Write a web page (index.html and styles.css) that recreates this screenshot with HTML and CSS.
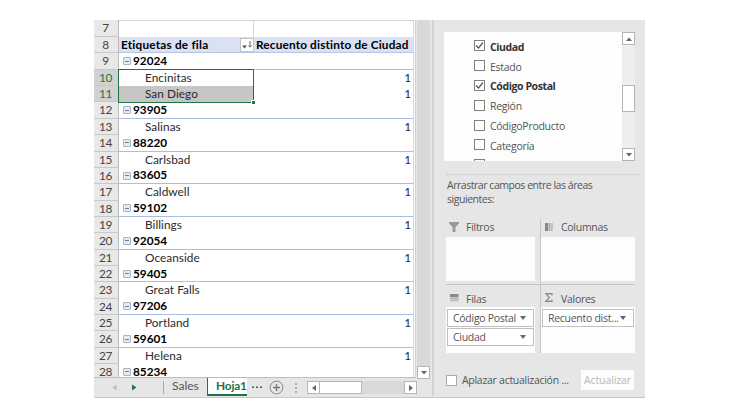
FILE: index.html
```
<!DOCTYPE html>
<html lang="es">
<head>
<meta charset="utf-8">
<title>Tabla dinámica</title>
<link rel="stylesheet" href="styles.css">
</head>
<body>
<main class="window">
  <section class="workbook">
    <div class="view">
      <div class="sheet">
        <div class="row blank"><span class="num">7</span><span class="a"></span><span class="b"></span></div>
        <div class="row head"><span class="num">8</span><span class="a"><span class="h1">Etiquetas de fila</span><span class="sort"><svg width="11" height="10" viewBox="0 0 11 10"><path d="M0 5.500h5l-2.500 3z" fill="#555"/><path d="M8 1v6M6.500 5.500l1.500 1.700 1.500-1.700" fill="none" stroke="#666"/></svg></span></span><span class="b"><span class="h2">Recuento distinto de Ciudad</span></span></div>
        <div class="row group"><span class="num">9</span><span class="a"><i class="fold"></i>92024</span><span class="b"></span></div>
        <div class="row item sel"><span class="num">10</span><span class="a">Encinitas</span><span class="b">1</span></div>
        <div class="row item sel gray"><span class="num">11</span><span class="a">San Diego</span><span class="b">1</span></div>
        <div class="row group"><span class="num">12</span><span class="a"><i class="fold"></i>93905</span><span class="b"></span></div>
        <div class="row item"><span class="num">13</span><span class="a">Salinas</span><span class="b">1</span></div>
        <div class="row group"><span class="num">14</span><span class="a"><i class="fold"></i>88220</span><span class="b"></span></div>
        <div class="row item"><span class="num">15</span><span class="a">Carlsbad</span><span class="b">1</span></div>
        <div class="row group"><span class="num">16</span><span class="a"><i class="fold"></i>83605</span><span class="b"></span></div>
        <div class="row item"><span class="num">17</span><span class="a">Caldwell</span><span class="b">1</span></div>
        <div class="row group"><span class="num">18</span><span class="a"><i class="fold"></i>59102</span><span class="b"></span></div>
        <div class="row item"><span class="num">19</span><span class="a">Billings</span><span class="b">1</span></div>
        <div class="row group"><span class="num">20</span><span class="a"><i class="fold"></i>92054</span><span class="b"></span></div>
        <div class="row item"><span class="num">21</span><span class="a">Oceanside</span><span class="b">1</span></div>
        <div class="row group"><span class="num">22</span><span class="a"><i class="fold"></i>59405</span><span class="b"></span></div>
        <div class="row item"><span class="num">23</span><span class="a">Great Falls</span><span class="b">1</span></div>
        <div class="row group"><span class="num">24</span><span class="a"><i class="fold"></i>97206</span><span class="b"></span></div>
        <div class="row item"><span class="num">25</span><span class="a">Portland</span><span class="b">1</span></div>
        <div class="row group"><span class="num">26</span><span class="a"><i class="fold"></i>59601</span><span class="b"></span></div>
        <div class="row item"><span class="num">27</span><span class="a">Helena</span><span class="b">1</span></div>
        <div class="row group"><span class="num">28</span><span class="a"><i class="fold"></i>85234</span><span class="b"></span></div>
        <div class="selection"></div>
      </div>
      <div class="vscroll"><span class="btn"><svg width="6" height="4"><path d="M0 0h6l-3 3.500z" fill="#666"/></svg></span></div>
    </div>
    <footer class="tabs">
      <svg class="nav" width="32" height="20"><path d="M4.500 6.500v6l-4-3z" fill="#bbb"/><path d="M20 6.500v6l4.500-3z" fill="#217346"/></svg>
      <span class="tab">Sales</span>
      <span class="tab active">Hoja1</span>
      <span class="more"><svg width="10" height="3"><path d="M0 .5h2v1.500h-2zM4 .5h2v1.500h-2zM8 .5h2v1.500h-2z" fill="#217346"/></svg></span>
      <svg class="add" width="15" height="15"><circle cx="7.500" cy="7.500" r="6.400" fill="none" stroke="#8a8a8a"/><path d="M7.500 4v7M4 7.500h7" stroke="#777" stroke-width="1.300"/></svg>
      <svg class="grip" width="2" height="10"><path d="M0 0h2v2h-2zM0 4h2v2h-2zM0 8h2v2h-2z" fill="#b0b0b0"/></svg>
      <div class="hscroll"><span class="btn"><svg width="4" height="6"><path d="M4 0v6l-4-3z" fill="#666"/></svg></span><span class="thumb"></span><span class="btn"><svg width="4" height="6"><path d="M0 0v6l4-3z" fill="#666"/></svg></span></div>
    </footer>
  </section>
  <aside class="pane">
    <div class="fields">
      <ul class="list">
        <li class="on"><span class="box"><svg width="9" height="9"><path d="M1 4.500l2.500 2.500 4.500-5.500" fill="none" stroke="#555" stroke-width="1.200"/></svg></span><span>Ciudad</span></li>
        <li><span class="box"></span><span>Estado</span></li>
        <li class="on"><span class="box"><svg width="9" height="9"><path d="M1 4.500l2.500 2.500 4.500-5.500" fill="none" stroke="#555" stroke-width="1.200"/></svg></span><span>Código Postal</span></li>
        <li><span class="box"></span><span>Región</span></li>
        <li><span class="box"></span><span>CódigoProducto</span></li>
        <li><span class="box"></span><span>Categoría</span></li>
        <li><span class="box"></span></li>
      </ul>
      <div class="fscroll"><span class="btn"><svg width="6" height="4"><path d="M0 4h6l-3-3.500z" fill="#666"/></svg></span><span class="thumb"></span><span class="btn"><svg width="6" height="4"><path d="M0 0h6l-3 3.500z" fill="#666"/></svg></span></div>
    </div>
    <p class="hint">Arrastrar campos entre las áreas<br>siguientes:</p>
    <div class="areas">
      <div class="area tl"><h3><svg width="10" height="10"><path d="M0 0h10v1.500l-3.500 3.500v5h-3v-5l-3.500-3.500z" fill="#999"/></svg>Filtros</h3><div class="drop"></div></div>
      <div class="area tr"><h3><svg width="10" height="10"><path d="M1 1h3v8h-3z" fill="#888"/><path d="M4.500 1h2v8h-2z" fill="#aaa"/><path d="M7 1h2v8h-2z" fill="#c2c2c2"/></svg>Columnas</h3><div class="drop"></div></div>
      <div class="area bl"><h3><svg width="10" height="10"><path d="M1 1h8.500v3h-8.500z" fill="#888"/><path d="M1 4.500h8.500v2h-8.500z" fill="#b0b0b0"/><path d="M1 6.800h8.500v1.700h-8.500z" fill="#c2c2c2"/></svg>Filas</h3><div class="drop"><span class="pill"><span>Código Postal</span><i></i></span><span class="pill"><span>Ciudad</span><i></i></span></div></div>
      <div class="area br"><h3><svg width="10" height="10"><path d="M8 2.500v-1.800h-6l3.300 3.800-3.300 3.800h6v-1.800" fill="none" stroke="#858585" stroke-width="1.200"/></svg>Valores</h3><div class="drop"><span class="pill"><span>Recuento dist...</span><i></i></span></div></div>
    </div>
    <div class="defer"><span class="box"></span><span class="later">Aplazar actualización ...</span><span class="update">Actualizar</span></div>
  </aside>
</main>
</body>
</html>
```
FILE: styles.css
```
* { box-sizing: border-box; }
body { margin: 0; background: #fff; overflow: hidden; }
svg { display: block; flex: none; }
.window {
  display: flex; width: 551px; height: 378px; margin: 20px 0 0 94px;
  background: #e6e6e6; border-bottom: 1px solid #c8c8c8;
}
.workbook { width: 340px; height: 376px; border-right: 2px solid #d2d2d2; font-family: Lato, sans-serif; }
.view { display: flex; height: 358px; }
.sheet {
  position: relative; width: 322px; height: 358px; overflow: hidden; background: #fff;
  border-bottom: 1px solid #bdbdbd; border-right: 1px solid #d0d0d0;
  font-size: 11.8px; line-height: 16.3px; color: #2a2a2a;
}
.row { display: flex; height: 16.37px; white-space: nowrap; }
.row.blank { height: 17px; }
.num {
  width: 25px; padding-right: 1px; text-align: center; background: #e8e8e8; color: #444;
  border-right: 1px solid #bbb; border-bottom: 1px solid #c8c8c8; line-height: 16.3px; letter-spacing: -.3px;
}
.row .a { display: flex; align-items: center; width: 135px; }
.row .b { width: 160px; text-align: right; padding-right: 2px; border-right: 1px solid #d8d8d8; }
.blank .a { border-right: 1px solid #d4d4d4; }
.blank .a, .blank .b { border-top: 1px solid #d4d4d4; }
.head .a, .head .b { background: #d9e1f2; border-bottom: 1px solid #b4c6e7; color: #000; }
.head .a { justify-content: space-between; padding-left: 2px; }
.head .b { padding-left: 2px; text-align: left; }
.h1, .h2 { font-weight: 700; letter-spacing: .16px; }
.h1 { letter-spacing: .2px; }
.sort {
  display: flex; align-items: center; justify-content: center; width: 14px; height: 14px;
  background: #fff; border: 1px solid #c4c4c4;
}
.group .a { padding-left: 4px; font-weight: 700; color: #000; }
.group .a, .group .b { border-bottom: 1px solid #a9bfe2; }
.item .a { padding-left: 26px; letter-spacing: .05px; }
.fold {
  width: 8px; height: 8px; margin-right: 2px; border: 1px solid #a5b5ca; border-radius: 1px;
  background: linear-gradient(#6a7f9d, #6a7f9d) center / 4px 1px no-repeat #e5ebf3;
}
.sel .num { background: #d2d2d2; color: #217346; border-right-color: #217346; }
.gray .a { background: #c6c6c6; }
.selection { position: absolute; left: 24px; top: 49px; width: 136px; height: 34px; border: 1.5px solid #217346; }
.selection::after {
  content: ""; position: absolute; right: -2px; bottom: -2px; width: 3px; height: 3px;
  background: #217346; border: solid #fff; border-width: 1px 0 0 1px; box-sizing: content-box;
}
.btn {
  display: flex; align-items: center; justify-content: center; flex: none;
  width: 13px; height: 13px; background: #fff; border: 1px solid #b5b5b5;
}
.vscroll { display: flex; align-items: flex-end; width: 15px; padding-left: 1px; background: linear-gradient(#d9d9d9, #d9d9d9) 1px 0 / 13px 100% no-repeat; }
.vscroll .btn { position: relative; top: 1px; }
.tabs { display: flex; align-items: center; height: 19px; font-size: 12px; color: #555; }
.nav { margin-left: 18px; }
.tab {
  width: 44px; height: 19px; margin-left: 19px; padding-left: 9px; line-height: 15px;
  background: linear-gradient(#aaa, #aaa) 0 3px / 1px 13px no-repeat;
}
.tab.active {
  width: 40px; height: 18px; margin: -1px 0 0 0; padding-left: 8px; background: #fff;
  border-left: 1px solid #217346; border-bottom: 2px solid #217346;
  font-size: 11.8px; font-weight: 700; letter-spacing: -.15px; color: #217346;
}
.more { margin-left: 5px; }
.add { margin-left: 7px; }
.grip { margin-left: 11px; }
.hscroll { display: flex; width: 110px; height: 13px; margin-left: 10px; background: #d9d9d9; }
.hscroll .thumb { width: 42px; background: #fff; border: 1px solid #b5b5b5; border-left: 0; margin-right: auto; }

.pane { width: 211px; padding: 12px 10px 0 10px; font-family: "Open Sans", sans-serif; font-size: 10.5px; letter-spacing: -.28px; color: #555; white-space: nowrap; }
.fields { display: flex; width: 191px; height: 129px; overflow: hidden; background: #fdfdfd; }
.list { flex: 1; margin: 0; padding: 5px 0 0 30px; list-style: none; }
.list li { display: flex; align-items: center; height: 19.8px; gap: 5px; }
.list .on { font-weight: 700; color: #333; letter-spacing: -.4px; }
.box { display: flex; flex: none; width: 11px; height: 11px; margin-top: -2px; border: 1px solid #808080; background: #fff; }
.fscroll { display: flex; flex-direction: column; width: 13px; background: #eee; }
.fscroll .thumb { height: 27px; margin: 40px 0 auto; border: 1px solid #b5b5b5; background: #fff; }
.hint { width: 194px; margin: 13px 0 0 2px; padding: 4px 0 0 1px; border-top: 1px dotted #c4c4c4; line-height: 13.5px; letter-spacing: -.46px; }
.areas { display: grid; grid-template: 66px 68px / 95px 94px; margin: 13px 0 0 2px; }
.area { display: flex; flex-direction: column; }
.area h3 { display: flex; align-items: center; height: 18px; margin: 0; padding: 0 0 2px 3px; gap: 7px; font-size: 10.5px; font-weight: 400; }
.drop { height: 44px; background: #fdfdfd; }
.tl, .bl { border-right: 1px solid #c4c4c4; }
.tl, .tr { border-bottom: 1px solid #c4c4c4; }
.tl .drop, .bl .drop { width: 89px; }
.bl h3, .br h3 { height: 22px; padding-top: 6px; padding-bottom: 0; }
.bl h3 svg, .br h3 svg { margin-top: -2px; }
.bl .drop, .br .drop { height: 46px; padding: 2px 1px; }
.pill { display: flex; align-items: center; justify-content: space-between; height: 18px; margin-bottom: 1px; padding: 0 7px 0 5px; border: 1px solid #c0c0c0; background: #fff; }
.pill i { border: solid transparent; border-width: 4px 3.5px 0; border-top-color: #666; }
.defer { display: flex; align-items: center; height: 20px; margin: 17px 1px 0 2px; }
.defer .box { margin-top: 0; border-color: #aaa; }
.later { margin-left: 5px; }
.update { width: 53px; height: 20px; margin-left: auto; line-height: 20px; text-align: center; background: #fdfdfd; color: #b8b8b8; letter-spacing: -.1px; }
```
